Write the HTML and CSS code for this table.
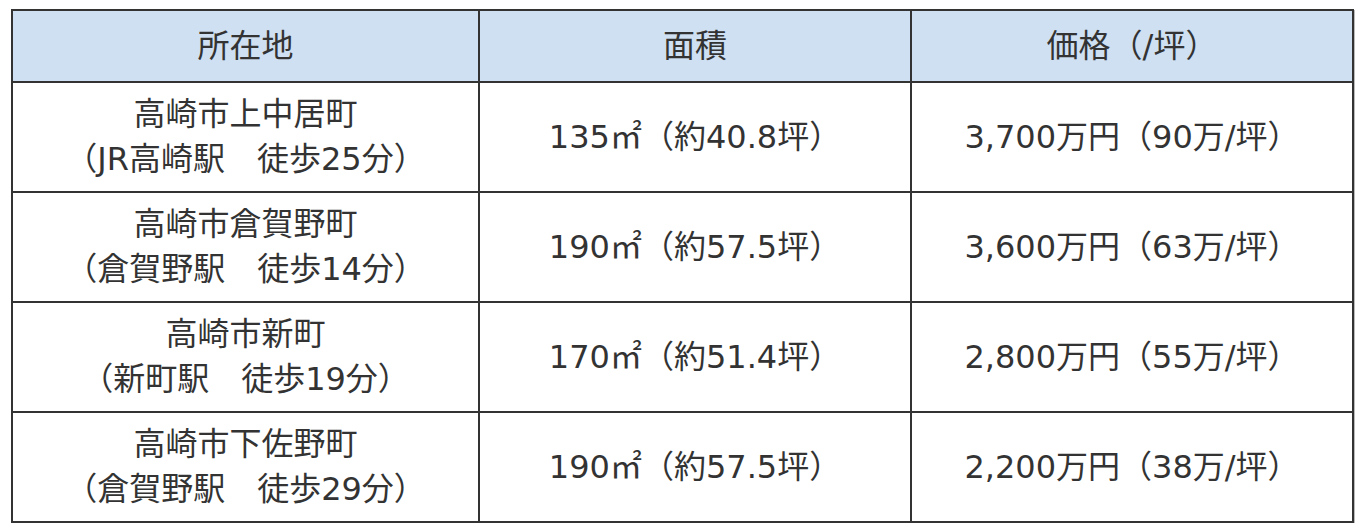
FILE: index.html
```html
<!DOCTYPE html>
<html lang="ja">
<head>
<meta charset="utf-8">
<link rel="stylesheet" href="styles.css">
</head>
<body>
<table class="tbl">
  <colgroup>
    <col class="c1"><col class="c2"><col class="c3">
  </colgroup>
  <thead>
    <tr><th>所在地</th><th>面積</th><th>価格（/坪）</th></tr>
  </thead>
  <tbody>
    <tr><td>高崎市上中居町<br>（JR高崎駅　徒歩25分）</td><td>135㎡（約40.8坪）</td><td>3,700万円（90万/坪）</td></tr>
    <tr><td>高崎市倉賀野町<br>（倉賀野駅　徒歩14分）</td><td>190㎡（約57.5坪）</td><td>3,600万円（63万/坪）</td></tr>
    <tr><td>高崎市新町<br>（新町駅　徒歩19分）</td><td>170㎡（約51.4坪）</td><td>2,800万円（55万/坪）</td></tr>
    <tr><td>高崎市下佐野町<br>（倉賀野駅　徒歩29分）</td><td>190㎡（約57.5坪）</td><td>2,200万円（38万/坪）</td></tr>
  </tbody>
</table>
</body>
</html>
```

FILE: styles.css
```css
html, body {
  margin: 0;
  padding: 0;
  background: #ffffff;
}
body {
  padding: 9px 0 0 11px;
  font-family: "DejaVu Sans", "Noto Sans CJK JP", sans-serif;
  color: #333333;
}
.tbl {
  width: 1341px;
  border-collapse: collapse;
  table-layout: fixed;
  border: 2px solid #333333;
  box-shadow: 1px 1px 0 #bbbbbb;
}
.c1 { width: 467px; }
.c2 { width: 432px; }
.c3 { width: 442px; }
.tbl th,
.tbl td {
  border: 2px solid #333333;
  text-align: center;
  vertical-align: middle;
  font-size: 32px;
  line-height: 45px;
  font-weight: normal;
  padding: 0;
}
.tbl th {
  background: #cfe0f2;
  height: 70px;
}
.tbl td {
  height: 108px;
}
```
